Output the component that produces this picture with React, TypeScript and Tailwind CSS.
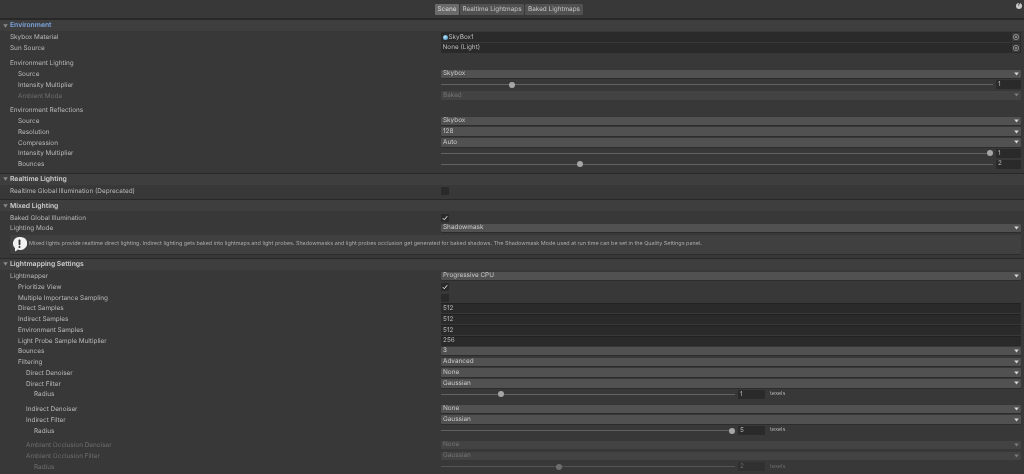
import React from "react";

const font = "font-['Inter','Liberation_Sans',sans-serif] [text-rendering:geometricPrecision] blur-[0.35px]";

const indentEnum: any = {
  0: "pl-[10px]",
  1: "pl-[18px]",
  2: "pl-[26px]",
  3: "pl-[34px]",
};

function Row(props: any) {
  const { label, indent = 0, off, children } = props;
  return (
    <div className="flex h-[10.75px] items-center">
      <div
        className={`w-[441px] shrink-0 truncate text-[6.4px] leading-[10px] ${indentEnum[indent]} ${
          off ? "text-[#6e6e6e]" : "text-[#b8b8b8]"
        }`}
      >
        {label}
      </div>
      <div className="flex min-w-0 flex-1 items-center pr-[3px]">{children}</div>
    </div>
  );
}

function Dropdown({ value, off }: any) {
  return (
    <div
      className={`mb-[0.5px] flex h-[8.5px] flex-1 items-center justify-between rounded-[1px] pl-[2px] pr-[2px] text-[6.4px] ${
        off
          ? "bg-[#434343] text-[#747474]"
          : "bg-[#515151] text-[#c8c8c8] shadow-[0_1px_0_#2c2c2c]"
      }`}
    >
      <span>{value}</span>
      <svg width="5" height="4" viewBox="0 0 5 4" className="mr-[0.5px]">
        <path d="M0.2 0.5H4.8L2.5 3.5Z" fill={off ? "#7c7c7c" : "#d8d8d8"} />
      </svg>
    </div>
  );
}

function Field({ value }: any) {
  return (
    <div className="flex h-[10px] flex-1 items-center rounded-[1px] border-t border-[#212121] bg-[#2a2a2a] pl-[2px] text-[6.4px] text-[#b8b8b8]">
      {value}
    </div>
  );
}

function ObjectField({ value, dot }: any) {
  return (
    <div className="flex h-[10px] flex-1 items-center justify-between bg-[#2a2a2a] pl-[1.5px] pr-[1px] text-[6.4px] text-[#b8b8b8]">
      <span className="flex items-center gap-[1px]">
        {dot && (
          <span className="h-[5px] w-[5px] rounded-full bg-[radial-gradient(circle_at_40%_40%,#bfe6f7,#2b7fb5)]" />
        )}
        {value}
      </span>
      <svg width="8" height="8" viewBox="0 0 8 8">
        <rect width="8" height="8" rx="1" fill="#3d3d3d" />
        <circle cx="4" cy="4" r="2.6" fill="none" stroke="#a8a8a8" strokeWidth="0.7" />
        <circle cx="4" cy="4" r="0.9" fill="#a8a8a8" />
      </svg>
    </div>
  );
}

function Check({ on }: any) {
  return (
    <div className="flex h-[8px] w-[8px] items-center justify-center rounded-[1px] bg-[#2a2a2a]">
      {on && (
        <svg width="6" height="6" viewBox="0 0 6 6">
          <path d="M0.8 3.2L2.3 4.8L5.2 1.2" fill="none" stroke="#e4e4e4" strokeWidth="1" />
        </svg>
      )}
    </div>
  );
}

// pos is the thumb centre, measured from the left end of the track
function Slider({ pos, value, off, texels }: any) {
  return (
    <div className="flex flex-1 items-center">
      <div className={`relative h-[1px] flex-1 ${off ? "bg-[#555555]" : "bg-[#626262]"}`}>
        <div
          className={`absolute top-[-2.5px] h-[6px] w-[6px] rounded-full ${off ? "bg-[#6e6e6e]" : "bg-[#a6a6a6]"}`}
          style={{ left: pos - 3 }}
        />
      </div>
      <div
        className={`ml-[3px] flex h-[9px] items-center rounded-[1px] pl-[2px] text-[6.4px] ${
          texels ? "w-[27px]" : "w-[25px]"
        } ${off ? "bg-[#303030] text-[#6c6c6c]" : "bg-[#2a2a2a] text-[#b8b8b8]"}`}
      >
        {value}
      </div>
      {texels && (
        <div className={`w-[256px] pl-[5px] text-[5.6px] ${off ? "text-[#6c6c6c]" : "text-[#b0b0b0]"}`}>
          texels
        </div>
      )}
    </div>
  );
}

function Header({ title, active }: any) {
  return (
    <div className="flex h-[12px] items-center border-t border-[#282828] bg-[#3e3e3e]">
      <svg width="5" height="4" viewBox="0 0 5 4" className="ml-[3px]">
        <path d="M0.2 0.3H4.8L2.5 3.7Z" fill="#8a8a8a" />
      </svg>
      <span
        className={`ml-[2px] text-[6.8px] font-semibold ${active ? "text-[#7ba4dc]" : "text-[#cccccc]"}`}
      >
        {title}
      </span>
    </div>
  );
}

function Tab({ title, active, width }: any) {
  return (
    <div
      className={`flex h-[11px] items-center justify-center whitespace-nowrap rounded-[1px] text-[6.4px] ${width} ${
        active ? "bg-[#6a6a6a] text-[#d8d8d8]" : "bg-[#515151] text-[#c4c4c4]"
      }`}
    >
      {title}
    </div>
  );
}

export default function App() {
  return (
    <div className={`h-[474px] w-[1024px] overflow-hidden bg-[#383838] ${font}`}>
      <div className="relative flex h-[18px] items-center justify-center gap-[1px] pr-[6px] pt-[1px]">
        <Tab title="Scene" active width="w-[24px]" />
        <Tab title="Realtime Lightmaps" width="w-[64px]" />
        <Tab title="Baked Lightmaps" width="w-[58px]" />
        <div className="absolute right-[2px] top-[3px] flex h-[6px] w-[6px] items-center justify-center rounded-full bg-[#c8c8c8] text-[5px] font-bold text-[#383838]">
          ?
        </div>
      </div>

      <div className="h-[1px] bg-[#282828]" />
      <Header title="Environment" active />
      <div className="h-[1px]" />
      <Row label="Skybox Material"><ObjectField value="SkyBox1" dot /></Row>
      <Row label="Sun Source"><ObjectField value="None (Light)" /></Row>
      <div className="h-[4.5px]" />
      <Row label="Environment Lighting" />
      <Row label="Source" indent={1}><Dropdown value="Skybox" /></Row>
      <Row label="Intensity Multiplier" indent={1}><Slider pos={71} value="1" /></Row>
      <Row label="Ambient Mode" indent={1} off><Dropdown value="Baked" off /></Row>
      <div className="h-[4px]" />
      <Row label="Environment Reflections" />
      <Row label="Source" indent={1}><Dropdown value="Skybox" /></Row>
      <Row label="Resolution" indent={1}><Dropdown value="128" /></Row>
      <Row label="Compression" indent={1}><Dropdown value="Auto" /></Row>
      <Row label="Intensity Multiplier" indent={1}><Slider pos={549} value="1" /></Row>
      <Row label="Bounces" indent={1}><Slider pos={139} value="2" /></Row>
      <div className="h-[3px]" />

      <Header title="Realtime Lighting" />
      <div className="h-[1px]" />
      <Row label="Realtime Global Illumination (Deprecated)"><Check /></Row>
      <div className="h-[3px]" />

      <Header title="Mixed Lighting" />
      <div className="h-[1px]" />
      <Row label="Baked Global Illumination"><Check on /></Row>
      <Row label="Lighting Mode"><Dropdown value="Shadowmask" /></Row>
      <div className="ml-[10px] mr-[3px] mt-[1px] flex h-[19px] items-center rounded-[1px] bg-[#404040] shadow-[0_1px_0_#2c2c2c]">
        <svg width="15" height="16" viewBox="0 0 15 16" className="ml-[2px]">
          <path d="M7.5 1A6.5 6.5 0 0 0 3 12.2V15.5L6.2 13.4A6.5 6.5 0 1 0 7.5 1Z" fill="#f2f2f2" />
          <rect x="6.6" y="3.6" width="1.8" height="5.6" rx="0.6" fill="#303030" />
          <circle cx="7.5" cy="10.9" r="1" fill="#303030" />
        </svg>
        <span className="ml-[2px] whitespace-nowrap text-[5.45px] text-[#a8a8a8]">
          Mixed lights provide realtime direct lighting. Indirect lighting gets baked into lightmaps and light probes. Shadowmasks and light probes occlusion get generated for baked shadows. The Shadowmask Mode used at run time can be set in the Quality Settings panel.
        </span>
      </div>
      <div className="h-[4px]" />

      <Header title="Lightmapping Settings" />
      <div className="h-[1px]" />
      <Row label="Lightmapper"><Dropdown value="Progressive CPU" /></Row>
      <Row label="Prioritize View" indent={1}><Check on /></Row>
      <Row label="Multiple Importance Sampling" indent={1}><Check /></Row>
      <Row label="Direct Samples" indent={1}><Field value="512" /></Row>
      <Row label="Indirect Samples" indent={1}><Field value="512" /></Row>
      <Row label="Environment Samples" indent={1}><Field value="512" /></Row>
      <Row label="Light Probe Sample Multiplier" indent={1}><Field value="256" /></Row>
      <Row label="Bounces" indent={1}><Dropdown value="3" /></Row>
      <Row label="Filtering" indent={1}><Dropdown value="Advanced" /></Row>
      <Row label="Direct Denoiser" indent={2}><Dropdown value="None" /></Row>
      <Row label="Direct Filter" indent={2}><Dropdown value="Gaussian" /></Row>
      <Row label="Radius" indent={3}><Slider pos={60} value="1" texels /></Row>
      <div className="h-[4px]" />
      <Row label="Indirect Denoiser" indent={2}><Dropdown value="None" /></Row>
      <Row label="Indirect Filter" indent={2}><Dropdown value="Gaussian" /></Row>
      <Row label="Radius" indent={3}><Slider pos={291} value="5" texels /></Row>
      <div className="h-[4px]" />
      <Row label="Ambient Occlusion Denoiser" indent={2} off><Dropdown value="None" off /></Row>
      <Row label="Ambient Occlusion Filter" indent={2} off><Dropdown value="Gaussian" off /></Row>
      <Row label="Radius" indent={3} off><Slider pos={118} value="2" texels off /></Row>
    </div>
  );
}
